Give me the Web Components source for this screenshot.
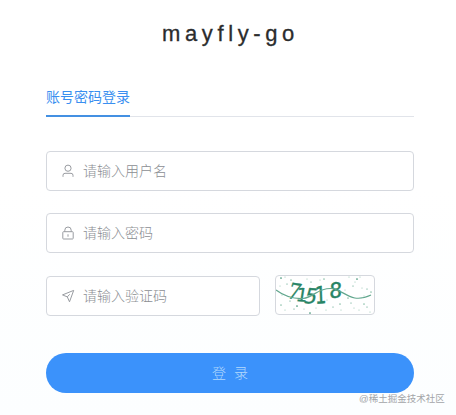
<!DOCTYPE html>
<html lang="zh-CN">
<head>
<meta charset="utf-8">
<title>mayfly-go</title>
<style>
html,body{margin:0;width:456px;height:415px;overflow:hidden}
body{background:linear-gradient(#fff 45%,#fcfeff);font:14px/20px "Liberation Sans","Noto Sans CJK SC",sans-serif}
</style>
</head>
<body>
<login-page></login-page>
<script>
const define = (name, html) => customElements.define(name, class extends HTMLElement {
  constructor() {
    super();
    this.attachShadow({mode: 'open'}).innerHTML = html;
  }
});

define('login-title', `<style>
:host{display:block;text-align:center;height:28px;color:#2b2c2d;font-size:22px;line-height:28px;letter-spacing:4.6px;padding-left:1px;-webkit-text-stroke:.3px #2b2c2d}
</style><slot></slot>`);

define('login-tabs', `<style>
:host{display:flex;height:34px;box-sizing:border-box;box-shadow:inset 0 -1px #e1e4ea}
.tab{color:#3a8ff0;font-weight:400;line-height:20px;height:32px;box-sizing:content-box;border-bottom:2px solid #4490e2}
.tab span{display:block;padding-top:4px}
</style><div class="tab"><span><slot></slot></span></div>`);

define('icon-input', `<style>
:host{display:flex;align-items:center;box-sizing:border-box;height:40px;border:1px solid #d5d8de;border-radius:4px;padding-left:14px;gap:8px;color:#8b8e93;font-weight:300;background:#fff}
::slotted(svg){width:14px;height:14px;fill:none;stroke:#999ca1;stroke-width:1;flex:none}
</style><slot name="icon"></slot><span><slot></slot></span>`);

define('login-captcha', `<style>
:host{display:block;box-sizing:border-box;width:100px;height:40px;border:1px solid #d5d8de;border-radius:4px;background:#fff;overflow:hidden}
svg{display:block}
text{font:22px "DejaVu Sans Mono",monospace;fill:#288465;stroke:#288465;stroke-width:.35px}
.serif{font-family:"DejaVu Serif",serif}
</style><svg width="98" height="38" viewBox="0 0 98 38">
<g id="dots"></g>
<text class="serif" transform="translate(10 22) rotate(8) skewX(-10) scale(.88 1)">7</text>
<text transform="translate(19 25) rotate(5) skewX(-4) scale(.85 .85)">1</text>
<text transform="translate(27 27) rotate(4) skewX(-12) scale(.92 .96)">5</text>
<text transform="translate(39 28) rotate(-6) skewX(-4) scale(.85 1.08)">1</text>
<text transform="translate(53 22) rotate(-3) skewX(-5) scale(.98 .95)">8</text>
<path d="M0 14C8 20 16 23 27 22.500C38 21 42 12 55 12.500S74 29 95 19" fill="none" stroke="#62a78e" stroke-width="1.2"/>
</svg>`);

define('login-button', `<style>
:host{display:flex;align-items:center;justify-content:center;height:40px;border-radius:20px;background:#3b92fb;color:#b4dafc;font-weight:300;word-spacing:4px}
</style><slot></slot>`);

define('page-credit', `<style>
:host{position:absolute;left:359px;top:391px;font-size:9.5px;line-height:15px;white-space:nowrap;color:#a3a5a8}
</style><slot></slot>`);

define('login-page', `<style>
:host{display:block;box-sizing:border-box;width:456px;height:415px;padding:20px 42px 0 46px}
login-tabs{margin-top:35px}
.form{display:grid;gap:22px;margin-top:34px}
.row{display:flex;gap:15px;align-items:flex-start}
.row icon-input{width:214px;margin-top:1px}
login-button{margin-top:37px}
</style>
<login-title>mayfly-go</login-title>
<login-tabs>账号密码登录</login-tabs>
<div class="form">
<icon-input><svg slot="icon" viewBox="0 0 14 14"><circle cx="7" cy="4.2" r="3.1"/><path d="M2 12.800v-1.500q0-2 2-2h6q2 0 2 2v1.500"/></svg>请输入用户名</icon-input>
<icon-input><svg slot="icon" viewBox="0 0 14 14"><rect x="1.800" y="5.7" width="10.400" height="7.3" rx=".7"/><path d="M3.8 5.7V4.2a3.2 3.2 0 0 1 6.4 0v1.5M7 8.3v2.4"/></svg>请输入密码</icon-input>
<div class="row"><icon-input><svg slot="icon" viewBox="0 0 14 14"><path d="M12.700 1.400 1.500 5.900l4.800 2 2.200 4.900zM6.300 7.900l2.400-2.600"/></svg>请输入验证码</icon-input><login-captcha></login-captcha></div>
</div>
<login-button>登 录</login-button>
<page-credit>@稀土掘金技术社区</page-credit>`);

// Noise specks scattered behind the captcha digits.
const specks = [[5,2],[9,1],[4,10],[11,8],[15,4],[31,3],[35,6],[44,4],[48,3],[60,6],[73,1],[79,6],[81,3],[84,1],[86,12],[91,13],[95,16],[69,14],[77,10],[6,19],[5,29],[14,25],[9,34],[28,33],[34,37],[40,32],[50,34],[57,31],[64,28],[65,34],[75,27],[78,32],[88,28],[91,31],[94,36],[83,34],[21,30],[63,18],[88,20],[45,10],[72,22],[51,24],[18,33]];
const captcha = document.querySelector('login-page').shadowRoot.querySelector('login-captcha');
captcha.shadowRoot.getElementById('dots').innerHTML = specks.map(([x, y], i) =>
  `<circle cx="${x}" cy="${y}" r="${i % 4 ? .55 : .85}" fill="${i % 3 ? '#8fc3ae' : '#3f9275'}"/>`).join('');
</script>
</body>
</html>
